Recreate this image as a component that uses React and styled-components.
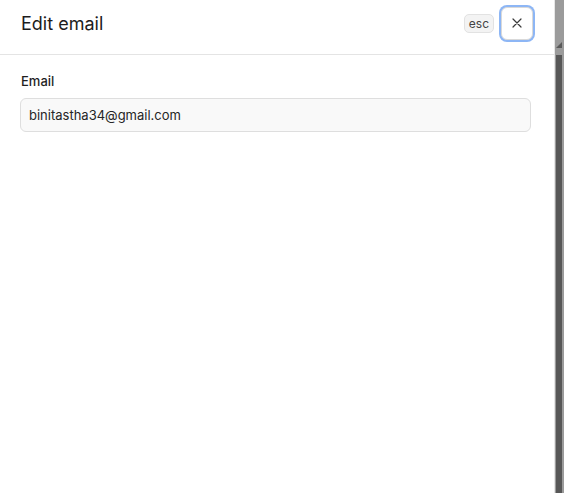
import React from "react";
import styled, { createGlobalStyle } from "styled-components";

const Global = createGlobalStyle`
  html, body { margin: 0; padding: 0; height: 100%; }
  body { font-family: Inter, "Noto Sans", sans-serif; background: #9a9a9a; }
  #root { height: 100%; }
`;

const Page = styled.div`
  display: flex;
  height: 493px;
  width: 564px;
  overflow: hidden;
`;

const Panel = styled.div`
  width: 555px;
  height: 100%;
  background: #fff;
  display: flex;
  flex-direction: column;
  border-right: 1px solid #e6e6e6;
  box-sizing: border-box;
`;

const Rail = styled.div`
  flex: 1;
  background: #9b9b9b;
  display: flex;
  flex-direction: column;
  padding-top: 42px;
  padding-left: 1px;
`;

const Arrow = styled.div`
  width: 0;
  height: 0;
  border-left: 6px solid transparent;
  border-bottom: 6px solid #5a5a5a;
  margin-bottom: 7px;
`;

const Thumb = styled.div`
  flex: 1;
  width: 6px;
  background: #575757;
`;

const Header = styled.div`
  height: 55px;
  box-sizing: border-box;
  border-bottom: 1px solid #e4e4e4;
  display: flex;
  align-items: center;
  justify-content: space-between;
  padding: 0 21px 0 21px;
`;

const Title = styled.h2`
  margin: 0;
  font-size: 18px;
  font-weight: 400;
  color: #1c1c1c;
  letter-spacing: 0;
  margin-top: -8px;
`;

const Actions = styled.div`
  display: flex;
  align-items: center;
  gap: 7px;
  margin-top: -8px;
`;

const Kbd = styled.span`
  font-size: 12px;
  color: #444;
  background: #f3f3f3;
  border: 1px solid #e2e2e2;
  border-radius: 5px;
  padding: 0 4px;
  height: 19px;
  line-height: 18px;
  box-sizing: border-box;
`;

const CloseButton = styled.button`
  width: 32px;
  height: 33px;
  border-radius: 6px;
  background: #fff;
  border: 1px solid #d9d9d9;
  box-shadow: 0 0 0 2px #8db6f5;
  display: flex;
  align-items: center;
  justify-content: center;
  padding: 0;
  color: #333;
`;

const Body = styled.div`
  padding: 18px 23px 0 20px;
  display: flex;
  flex-direction: column;
  gap: 9px;
`;

const Label = styled.label`
  font-size: 13px;
  font-weight: 500;
  color: #1f1f1f;
  padding-left: 1px;
`;

const Input = styled.input`
  height: 34px;
  box-sizing: border-box;
  border: 1px solid #dedede;
  border-radius: 6px;
  background: #f9f9f9;
  font-family: Inter, "Noto Sans", sans-serif;
  font-size: 13px;
  color: #262626;
  padding: 0 8px;
  outline: none;
`;

export default function App() {
  return (
    <>
      <Global />
      <Page>
        <Panel>
          <Header>
            <Title>Edit email</Title>
            <Actions>
              <Kbd>esc</Kbd>
              <CloseButton aria-label="Close">
                <svg width="10" height="10" viewBox="0 0 10 10" fill="none" stroke="#3a3a3a" strokeWidth="1.2" strokeLinecap="round">
                  <path d="M1 1l8 8M9 1l-8 8" />
                </svg>
              </CloseButton>
            </Actions>
          </Header>
          <Body>
            <Label>Email</Label>
            <Input defaultValue="binitastha34@gmail.com" />
          </Body>
        </Panel>
        <Rail>
          <Arrow />
          <Thumb />
        </Rail>
      </Page>
    </>
  );
}
